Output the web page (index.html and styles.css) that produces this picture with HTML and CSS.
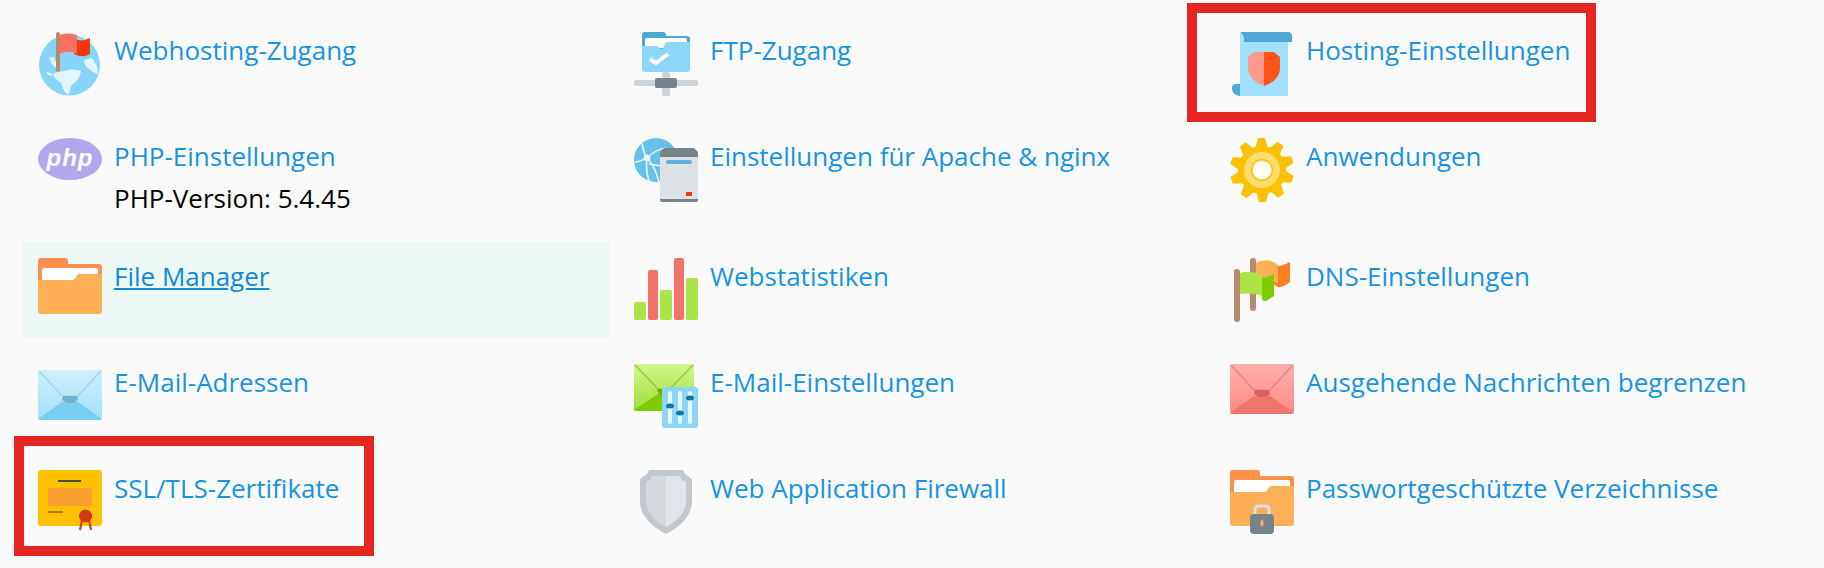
FILE: index.html
```html
<!DOCTYPE html>
<html lang="de">
<head>
<meta charset="utf-8">
<title>Hosting</title>
<link rel="stylesheet" href="styles.css">
</head>
<body>
<svg class="defs" width="0" height="0" aria-hidden="true">
  <defs>
    <linearGradient id="blue-body" x1="0" y1="0" x2="0" y2="1"><stop offset="0" stop-color="#cdeffe"/><stop offset="1" stop-color="#a4def9"/></linearGradient>
    <linearGradient id="red-body" x1="0" y1="0" x2="0" y2="1"><stop offset="0" stop-color="#ffb0aa"/><stop offset="1" stop-color="#ff8a82"/></linearGradient>
    <linearGradient id="green-body" x1="0" y1="0" x2="0" y2="1"><stop offset="0" stop-color="#d2f78b"/><stop offset="1" stop-color="#a0dc38"/></linearGradient>
  </defs>
</svg>
<main class="tools">
  <div class="tool">
    <svg class="icon" viewBox="0 0 64 64"><circle cx="31.500" cy="33" r="30.500" fill="#87d5f8"/><path d="M15 42c4-3 8-2 11-3 6-2 11-2 17 0-1 6-3 9-7 12-3 2-4 5-4 8l-2 4c-4-3-6-8-7-12-3-2-7-5-8-9zM46 28l8-2 5 8 1 8-5-2-4-3c-3-2-5-5-5-9zM11 26l5-1 3 8 3 2-3 2-5-5zM8 40l5 1 2 3-5-1zM23 18c5-3 9-4 13-3v4H23z" fill="#e1f5fe"/><rect x="18" y="0" width="4" height="40" rx="2" fill="#b78a6c"/><path d="M36 7c6 2 10 2 16-1v16c-5 3-10 3-16 0z" fill="#f4380b"/><path d="M22 3c5-2 11-2 17 0v19c-6-3-11-3-17 0z" fill="#ff6f64"/></svg>
    <div class="label"><a class="link" href="#">Webhosting-Zugang</a></div>
  </div>
  <div class="tool">
    <svg class="icon" viewBox="0 0 64 64"><rect x="8" y="0" width="24" height="12" rx="3" fill="#4ea8d4"/><rect x="8" y="4" width="48" height="30" rx="3" fill="#4ea8d4"/><rect x="11" y="6" width="42" height="10" rx="2" fill="#fff"/><path d="M8 14h14c3 0 3 3 6 3 2 0 2-7 6-7h22v27a3 3 0 0 1-3 3H11a3 3 0 0 1-3-3z" fill="#8bd6f9"/><path d="M16 27l6 4 12-9" fill="none" stroke="#fff" stroke-width="4"/><rect x="28" y="40" width="8" height="24" rx="2" fill="#ccd3d9"/><rect x="0" y="48" width="64" height="6" rx="2" fill="#ccd3d9"/><rect x="21" y="46" width="22" height="10" rx="2" fill="#77838a"/></svg>
    <div class="label"><a class="link" href="#">FTP-Zugang</a></div>
  </div>
  <div class="tool">
    <svg class="icon" viewBox="0 0 64 64"><path d="M10 0h48a4 4 0 0 1 4 4v6H14c0-5-1-8-4-10z" fill="#4ea8d4"/><path d="M10 52H6a4 4 0 0 0-4 4c0 4 3 8 8 8z" fill="#4ea8d4"/><path d="M10 0c3 2 4 5 4 10h44v54H10z" fill="#a0e1ff"/><path d="M24 20h10v34c-9-3-16-9-16-18V25z" fill="#ff9a90"/><path d="M34 20h10l6 5v11c0 9-7 15-16 18z" fill="#ff5418"/></svg>
    <div class="label"><a class="link" href="#">Hosting-Einstellungen</a></div>
  </div>

  <div class="tool">
    <svg class="icon" viewBox="0 0 64 64"><ellipse cx="32" cy="21" rx="32" ry="21" fill="#b0a7ec"/><text class="php" x="32" y="28" text-anchor="middle">php</text></svg>
    <div class="label"><a class="link" href="#">PHP-Einstellungen</a><p class="note">PHP-Version: 5.4.45</p></div>
  </div>
  <div class="tool">
    <svg class="icon" viewBox="0 0 64 64"><circle cx="22" cy="22" r="22" fill="#66c0ea"/><path d="M8 5c1 6 2 11 5 15 5 5 9 12 12 24M13 20C19 14 24 11 32 10M13 20C9 22 5 24 1 24M13 20c-1 8-1 14 2 23M15 26c4 1 8 1 12 2" fill="none" stroke="#e8f6fc" stroke-width="1.600"/><circle cx="13" cy="20" r="3.500" fill="#e8f6fc"/><path d="M26 14l4-4h30l4 4v6H26z" fill="#77838a"/><rect x="26" y="19" width="38" height="43" fill="#dde2e6"/><path d="M26 61h38v1a2 2 0 0 1-2 2H28a2 2 0 0 1-2-2z" fill="#77838a"/><rect x="32" y="22" width="26" height="4" rx="2" fill="#5db0de"/><rect x="52" y="54" width="6" height="4" fill="#f4380b"/></svg>
    <div class="label"><a class="link" href="#">Einstellungen für Apache &amp; nginx</a></div>
  </div>
  <div class="tool">
    <svg class="icon" viewBox="0 0 64 64"><g fill="#ffc000"><circle cx="32" cy="32" r="24"/><path d="M28 0h7l3 11H25z"/><path d="M28 0h7l3 11H25z" transform="rotate(36 32 32)"/><path d="M28 0h7l3 11H25z" transform="rotate(72 32 32)"/><path d="M28 0h7l3 11H25z" transform="rotate(108 32 32)"/><path d="M28 0h7l3 11H25z" transform="rotate(144 32 32)"/><path d="M28 0h7l3 11H25z" transform="rotate(180 32 32)"/><path d="M28 0h7l3 11H25z" transform="rotate(216 32 32)"/><path d="M28 0h7l3 11H25z" transform="rotate(252 32 32)"/><path d="M28 0h7l3 11H25z" transform="rotate(288 32 32)"/><path d="M28 0h7l3 11H25z" transform="rotate(324 32 32)"/></g><circle cx="32" cy="32" r="18" fill="#ffdc6e"/><circle cx="32" cy="32" r="11" fill="#ffc000"/><circle cx="32" cy="32" r="9.500" fill="#fff"/></svg>
    <div class="label"><a class="link" href="#">Anwendungen</a></div>
  </div>

  <div class="tool is-active">
    <svg class="icon" viewBox="0 0 64 64"><path d="M3 0h24c2 0 3 1 3 3v3h31a3 3 0 0 1 3 3v30H0V3c0-2 1-3 3-3z" fill="#ff8f4c"/><rect x="4" y="10" width="56" height="20" rx="2" fill="#fff"/><path d="M0 22h34c2 0 3-1 4-3s2-3 4-3h22v37a3 3 0 0 1-3 3H3a3 3 0 0 1-3-3z" fill="#ffb056"/></svg>
    <div class="label"><a class="link link-hover" href="#">File Manager</a></div>
  </div>
  <div class="tool">
    <svg class="icon" viewBox="0 0 64 64"><rect x="0" y="44" width="12" height="18" rx="2" fill="#ace448"/><rect x="14" y="12" width="10" height="50" rx="2" fill="#f0736a"/><rect x="26" y="32" width="12" height="30" rx="2" fill="#ace448"/><rect x="40" y="0" width="10" height="62" rx="2" fill="#f0736a"/><rect x="52" y="20" width="12" height="42" rx="2" fill="#ace448"/></svg>
    <div class="label"><a class="link" href="#">Webstatistiken</a></div>
  </div>
  <div class="tool">
    <svg class="icon" viewBox="0 0 64 64"><rect x="20" y="0" width="6" height="53" rx="3" fill="#b78a6c"/><path d="M44 8c5 1 10-1 16-4v20c-4 3-8 5-11 5-2 0-4-1-5-3z" fill="#ff7f20"/><path d="M26 5c7-4 15-4 22 2v19c-7-5-15-5-22-1z" fill="#ffb056"/><rect x="4" y="11" width="6" height="53" rx="3" fill="#b78a6c"/><path d="M32 20c4 0 8-2 12-4v22c-4 2-6 5-9 5-2 0-3-1-3-3z" fill="#7ecb00"/><path d="M10 15c7-2 15-2 22 3v20c-7-3-15-3-22-2z" fill="#ace448"/></svg>
    <div class="label"><a class="link" href="#">DNS-Einstellungen</a></div>
  </div>

  <div class="tool">
    <svg class="icon" viewBox="0 0 64 64"><rect x="0" y="6" width="64" height="50" rx="3" fill="url(#blue-body)"/><path d="M1 7l23 25h16L63 7" fill="none" stroke="#a5cfe2" stroke-width="1.200"/><path d="M0 55l24-17h16l24 17-2 1H2z" fill="#78cdf1"/><path d="M24 36l1-4h14l1 4-5 3h-6z" fill="#6fb3d4"/></svg>
    <div class="label"><a class="link" href="#">E-Mail-Adressen</a></div>
  </div>
  <div class="tool">
    <svg class="icon" viewBox="0 0 64 64"><rect x="0" y="0" width="60" height="47" rx="2" fill="url(#green-body)"/><path d="M1 1l23 24h12L59 1" fill="none" stroke="#8cc82c" stroke-width="1.200"/><path d="M0 46l24-16h12l24 16-2 1H2z" fill="#7ecb00"/><path d="M23 27l1-2h12l1 2-4 5h-6z" fill="#6aaf00"/><rect x="28" y="23" width="36" height="41" rx="3" fill="#8bd6f9"/><rect x="34" y="27" width="4" height="33" rx="2" fill="#e8f7fe"/><rect x="44" y="27" width="4" height="33" rx="2" fill="#e8f7fe"/><rect x="54" y="27" width="4" height="33" rx="2" fill="#e8f7fe"/><ellipse cx="36" cy="42" rx="4" ry="2.500" fill="#0f76a8"/><ellipse cx="46" cy="49" rx="4" ry="2.500" fill="#0f76a8"/><ellipse cx="56" cy="34" rx="4" ry="2.500" fill="#0f76a8"/></svg>
    <div class="label"><a class="link" href="#">E-Mail-Einstellungen</a></div>
  </div>
  <div class="tool">
    <svg class="icon" viewBox="0 0 64 64"><rect x="0" y="0" width="64" height="50" rx="3" fill="url(#red-body)"/><path d="M1 1l23 25h16L63 1" fill="none" stroke="#e77f78" stroke-width="1.200"/><path d="M0 49l24-17h16l24 17-2 1H2z" fill="#ee766d"/><path d="M24 30l1-4h14l1 4-5 3h-6z" fill="#d9625a"/></svg>
    <div class="label"><a class="link" href="#">Ausgehende Nachrichten begrenzen</a></div>
  </div>

  <div class="tool">
    <svg class="icon" viewBox="0 0 64 64"><rect x="0" y="0" width="64" height="56" rx="3" fill="#ffc000"/><rect x="20" y="10" width="23" height="2" fill="#4a4a4a"/><rect x="10" y="18" width="44" height="18" fill="#f99f2f"/><rect x="10" y="41" width="15" height="2" fill="#b9771b"/><path d="M44 50l-2 10M51 50l2 10" stroke="#d4381a" stroke-width="2" fill="none"/><circle cx="47.500" cy="46" r="6.500" fill="#d4381a"/></svg>
    <div class="label"><a class="link" href="#">SSL/TLS-Zertifikate</a></div>
  </div>
  <div class="tool">
    <svg class="icon" viewBox="0 0 64 64"><path d="M15 0h34l2 4 7 5v22c0 15-12 26-26 33C18 57 6 46 6 31V9l7-5z" fill="#c2c9ce"/><path d="M32 6H18l-2 4-4 2v19c0 12 10 21 20 26z" fill="#d3d9dd"/><path d="M32 6h14l2 4 4 2v19c0 12-10 21-20 26z" fill="#e1e5e9"/></svg>
    <div class="label"><a class="link" href="#">Web Application Firewall</a></div>
  </div>
  <div class="tool">
    <svg class="icon" viewBox="0 0 64 64"><path d="M3 0h24c2 0 3 1 3 3v3h31a3 3 0 0 1 3 3v30H0V3c0-2 1-3 3-3z" fill="#ff8f4c"/><rect x="4" y="10" width="56" height="20" rx="2" fill="#fff"/><path d="M0 22h34c2 0 3-1 4-3s2-3 4-3h22v37a3 3 0 0 1-3 3H3a3 3 0 0 1-3-3z" fill="#ffb056"/><path d="M25 46V39a3 3 0 0 1 3-3h8a3 3 0 0 1 3 3v7" fill="none" stroke="#dde2e6" stroke-width="3"/><rect x="20" y="44" width="24" height="20" rx="4" fill="#77838a"/><ellipse cx="32" cy="53" rx="1.500" ry="3.500" fill="#ffb056"/></svg>
    <div class="label"><a class="link" href="#">Passwortgeschützte Verzeichnisse</a></div>
  </div>
</main>
<div class="callout callout-ssl"></div>
<div class="callout callout-hosting"></div>
</body>
</html>
```
FILE: styles.css
```css
* { box-sizing: border-box; }
html, body { margin: 0; height: 100%; overflow: hidden; }
body {
  position: relative;
  background: #fafafa;
  font-family: "Open Sans", "Noto Sans", sans-serif;
  font-size: 26px;
  color: #000;
}
.defs { position: absolute; }
.tools {
  display: grid;
  grid-template-columns: repeat(3, 588px);
  grid-template-rows: 96px 110px 96px 96px 96px;
  gap: 10px 8px;
  padding: 16px 22px;
}
.tool {
  display: flex;
  gap: 12px;
  padding: 16px;
}
.is-active { background: #ecf9f7; }
.icon { width: 64px; height: 64px; flex: none; display: block; }
.label { line-height: 36px; }
.link { color: #1793e6; text-decoration: none; }
.link-hover { color: #0f8ad8; text-decoration: underline; }
.note { margin: 6px 0 0; }
.php { font: italic 900 24px "Liberation Sans", sans-serif; fill: #fff; letter-spacing: 1px; }
.callout { position: absolute; border: 10px solid #e62622; }
.callout-ssl { left: 14px; top: 436px; width: 360px; height: 120px; }
.callout-hosting { left: 1187px; top: 3px; width: 409px; height: 119px; }
```
